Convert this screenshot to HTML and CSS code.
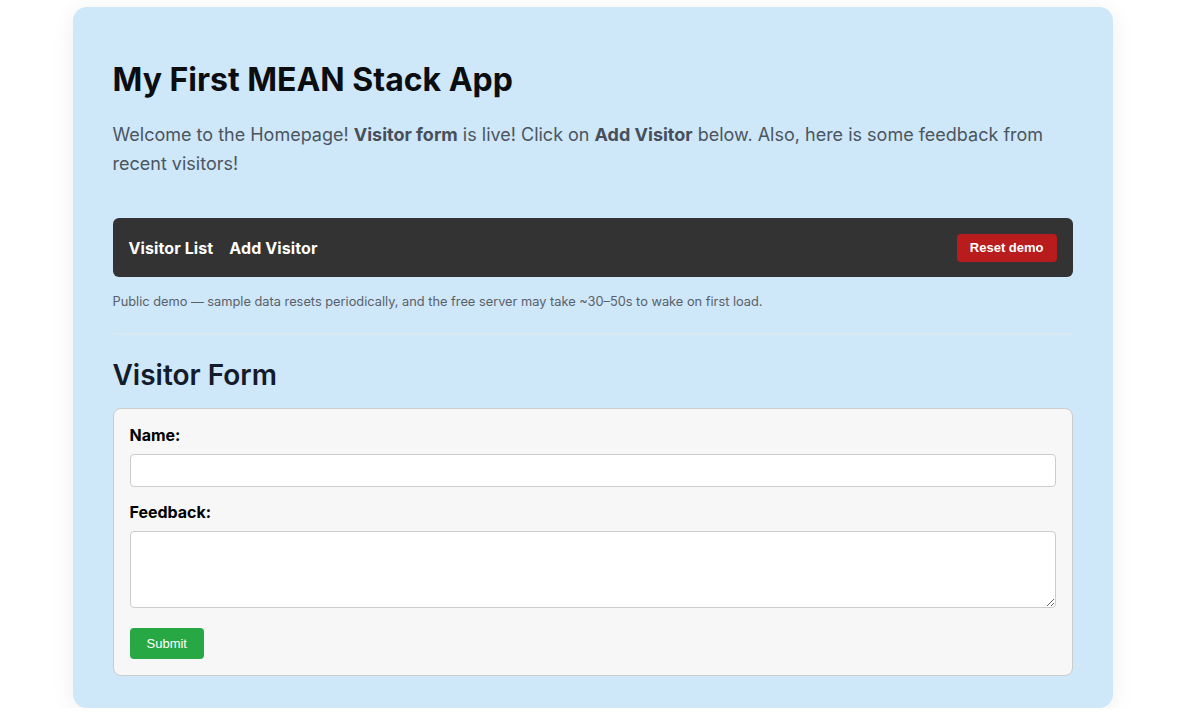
FILE: index.html
```html
<!DOCTYPE html>
<html lang="en">
<head>
<meta charset="utf-8">
<title>My First MEAN Stack App</title>
<link rel="stylesheet" href="styles.css">
</head>
<body>
<div class="container">
  <h1 class="title">My First MEAN Stack App</h1>
  <p class="intro">Welcome to the Homepage! <strong>Visitor form</strong> is live! Click on <strong>Add Visitor</strong> below. Also, here is some feedback from recent visitors!</p>
  <nav class="navbar">
    <div class="nav-links">
      <a class="nav-link" href="#">Visitor List</a>
      <a class="nav-link" href="#">Add Visitor</a>
    </div>
    <button class="btn-reset" type="button">Reset demo</button>
  </nav>
  <p class="note">Public demo — sample data resets periodically, and the free server may take ~30–50s to wake on first load.</p>
  <hr class="divider">
  <h2 class="section-title">Visitor Form</h2>
  <form class="card">
    <label class="label" for="name">Name:</label>
    <input class="input" id="name" type="text">
    <label class="label label-gap" for="feedback">Feedback:</label>
    <textarea class="textarea" id="feedback"></textarea>
    <button class="btn-submit" type="button">Submit</button>
  </form>
</div>
</body>
</html>
```
FILE: styles.css
```css
* { box-sizing: border-box; }
html, body { margin: 0; padding: 0; }
body {
  background: #ffffff;
  font-family: "Inter", "Liberation Sans", sans-serif;
  padding: 7px 0 0 1px;
}
.container {
  width: 1040px;
  margin: 0 auto;
  background: #cee7f9;
  border-radius: 14px;
  padding: 40px 40px 32px;
  box-shadow: 0 4px 24px rgba(0, 0, 0, 0.07);
}
.title {
  margin: 13px 0 22px;
  font-size: 32px;
  font-weight: 700;
  color: #0b0d10;
  line-height: normal;
}
.intro {
  margin: 0 0 39px;
  font-size: 18px;
  line-height: 1.6;
  color: #4b5560;
}
.intro strong { font-weight: 700; color: #464f5a; }
.navbar {
  display: flex;
  align-items: center;
  justify-content: space-between;
  background: #333333;
  border-radius: 6px;
  padding: 16px 16px 15px;
}
.nav-links { display: flex; gap: 16px; }
.nav-link {
  color: #ffffff;
  text-decoration: none;
  font-weight: 700;
  font-size: 16px;
  letter-spacing: 0.1px;
}
.btn-reset {
  height: 28px;
  padding: 0 13px;
  border: none;
  border-radius: 4px;
  background: #b91c1c;
  color: #ffffff;
  font-family: "Liberation Sans", Arial, sans-serif;
  font-weight: 700;
  font-size: 13px;
}
.note {
  margin: 15px 0 0;
  font-size: 12.8px;
  line-height: 1.5;
  color: #5a6068;
}
.divider {
  margin: 22px 0 23px;
  border: none;
  border-top: 2px solid #dbe9f3;
  height: 0;
}
.section-title {
  margin: 0 0 16px;
  font-size: 28px;
  font-weight: 600;
  color: #141b2b;
  line-height: normal;
}
.card {
  display: flex;
  flex-direction: column;
  align-items: flex-start;
  background: #f7f7f7;
  border: 1px solid #cccccc;
  border-radius: 8px;
  padding: 16px;
}
.label {
  font-size: 16px;
  font-weight: 700;
  color: #000000;
  margin-bottom: 9px;
  line-height: normal;
}
.label-gap { margin-top: 15px; }
.input, .textarea {
  width: 100%;
  border: 1px solid #cccccc;
  border-radius: 4px;
  background: #ffffff;
  font-family: "Inter", "Liberation Sans", sans-serif;
  font-size: 14px;
}
.input { height: 33px; }
.textarea { height: 77px; resize: vertical; display: block; }
.btn-submit {
  margin-top: 20px;
  height: 31px;
  padding: 0 17px;
  border: none;
  border-radius: 4px;
  background: #28a745;
  color: #ffffff;
  font-family: "Liberation Sans", Arial, sans-serif;
  font-size: 13px;
}
```
